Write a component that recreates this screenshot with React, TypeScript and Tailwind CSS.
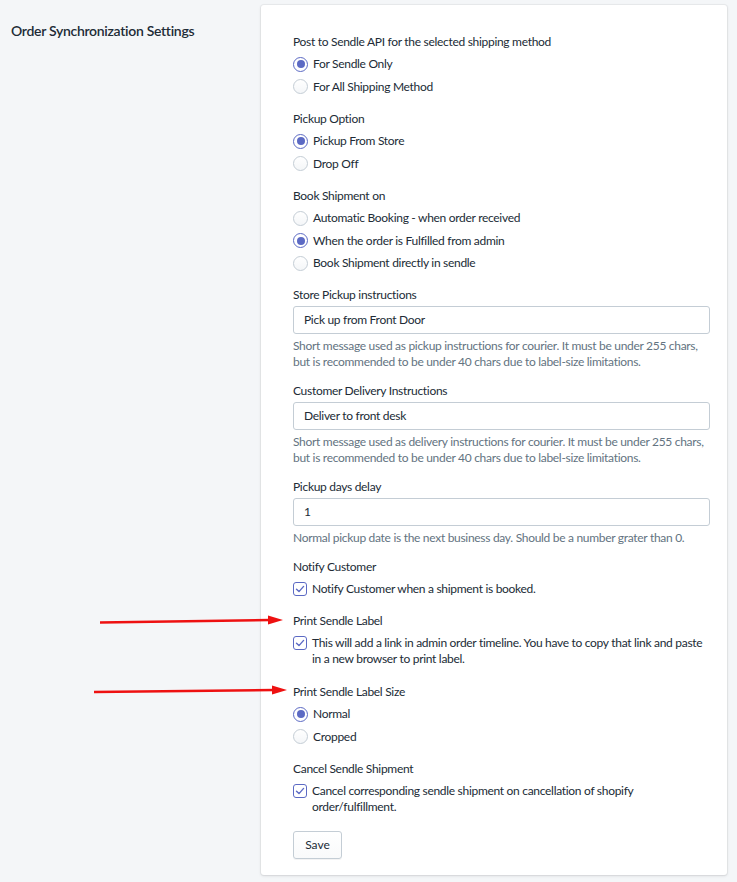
import React from "react";

const font = { fontFamily: 'Lato, "Noto Sans", sans-serif' };

function Radio({ checked, label }: { checked?: boolean; label: string }) {
  return (
    <div className="flex h-[22.5px] items-center">
      <span
        className={
          "flex h-[15px] w-[15px] items-center justify-center rounded-full border " +
          (checked ? "border-[#5c6ac4] bg-white" : "border-[#c4cdd5] bg-gradient-to-b from-white to-[#f4f6f8]")
        }
      >
        {checked && <span className="h-[8px] w-[8px] rounded-full bg-[#5c6ac4]" />}
      </span>
      <span className="ml-[5px] text-[12px] leading-[16px] tracking-[-0.3px] text-[#212b36]">{label}</span>
    </div>
  );
}

function Check({ label }: { label: string }) {
  return (
    <div className="flex items-start py-[3px]">
      <span className="mt-[1px] flex h-[14px] w-[14px] shrink-0 items-center justify-center rounded-[3px] border border-[#5c6ac4] bg-white">
        <svg width="10" height="10" viewBox="0 0 10 10" fill="none">
          <path d="M1.5 5.2 L4 7.6 L8.6 2.4" stroke="#5c6ac4" strokeWidth="1.4" strokeLinecap="round" strokeLinejoin="round" />
        </svg>
      </span>
      <span className="ml-[5px] text-[12px] leading-[16px] tracking-[-0.3px] text-[#212b36]">{label}</span>
    </div>
  );
}

function Label({ children }: { children: React.ReactNode }) {
  return <div className="flex h-[22px] items-center text-[12px] tracking-[-0.3px] text-[#212b36]">{children}</div>;
}

function Input({ value }: { value: string }) {
  return (
    <div className="flex h-[28px] items-center rounded-[3px] border border-[#c4cdd5] bg-white pl-[10px] text-[12px] tracking-[-0.3px] text-[#212b36]">
      {value}
    </div>
  );
}

function Help({ children }: { children: React.ReactNode }) {
  return <div className="mt-[4px] text-[12px] leading-[16px] tracking-[-0.3px] text-[#637381]">{children}</div>;
}

function Arrow({ x1, y1, x2, y2 }: { x1: number; y1: number; x2: number; y2: number }) {
  const hx = x2 - 15;
  return (
    <svg className="pointer-events-none absolute left-0 top-0" width="737" height="882">
      <line x1={x1} y1={y1} x2={hx + 2} y2={y2} stroke="#ee1111" strokeWidth="2.5" />
      <polygon points={`${hx},${y2 - 4.5} ${x2},${y2} ${hx},${y2 + 4.5}`} fill="#ee1111" />
    </svg>
  );
}

export default function App() {
  return (
    <div className="relative h-[882px] w-[737px] overflow-hidden bg-[#f4f6f8]" style={font}>
      <div className="flex">
        <div className="w-[261px] shrink-0 pl-[11px] pt-[21px]">
          <div className="text-[14px] font-semibold leading-[20px] tracking-[-0.3px] text-[#212b36]">Order Synchronization Settings</div>
        </div>
        <div className="mt-[5px] w-[466px] rounded-[3px] bg-white pb-[16px] pl-[32px] pr-[17px] pt-[26px] shadow-[0_0_0_1px_rgba(63,63,68,0.05),0_1px_3px_0_rgba(63,63,68,0.15)]">
          <Label>Post to Sendle API for the selected shipping method</Label>
          <Radio checked label="For Sendle Only" />
          <Radio label="For All Shipping Method" />

          <div className="mt-[10px]" />
          <Label>Pickup Option</Label>
          <Radio checked label="Pickup From Store" />
          <Radio label="Drop Off" />

          <div className="mt-[10px]" />
          <Label>Book Shipment on</Label>
          <Radio label="Automatic Booking - when order received" />
          <Radio checked label="When the order is Fulfilled from admin" />
          <Radio label="Book Shipment directly in sendle" />

          <div className="mt-[9.5px]" />
          <Label>Store Pickup instructions</Label>
          <Input value="Pick up from Front Door" />
          <Help>
            Short message used as pickup instructions for courier. It must be under 255 chars, but is recommended to be under 40 chars due to label-size limitations.
          </Help>

          <div className="mt-[10px]" />
          <Label>Customer Delivery Instructions</Label>
          <Input value="Deliver to front desk" />
          <Help>
            Short message used as delivery instructions for courier. It must be under 255 chars, but is recommended to be under 40 chars due to label-size limitations.
          </Help>

          <div className="mt-[10px]" />
          <Label>Pickup days delay</Label>
          <Input value="1" />
          <Help>Normal pickup date is the next business day. Should be a number grater than 0.</Help>

          <div className="mt-[10px]" />
          <Label>Notify Customer</Label>
          <Check label="Notify Customer when a shipment is booked." />

          <div className="mt-[10px]" />
          <Label>Print Sendle Label</Label>
          <Check label="This will add a link in admin order timeline. You have to copy that link and paste in a new browser to print label." />

          <div className="mt-[11px]" />
          <Label>Print Sendle Label Size</Label>
          <Radio checked label="Normal" />
          <Radio label="Cropped" />

          <div className="mt-[10px]" />
          <Label>Cancel Sendle Shipment</Label>
          <Check label="Cancel corresponding sendle shipment on cancellation of shopify order/fulfillment." />

          <div className="mt-[13px] flex">
            <button className="flex h-[28px] w-[49px] items-center justify-center rounded-[3px] border border-[#c4cdd5] bg-gradient-to-b from-white to-[#f9fafb] text-[12px] text-[#212b36] shadow-[0_1px_0_0_rgba(22,29,37,0.05)]">
              Save
            </button>
          </div>
        </div>
      </div>
      <Arrow x1={100} y1={622.5} x2={283} y2={620} />
      <Arrow x1={94} y1={692} x2={287} y2={690} />
    </div>
  );
}
